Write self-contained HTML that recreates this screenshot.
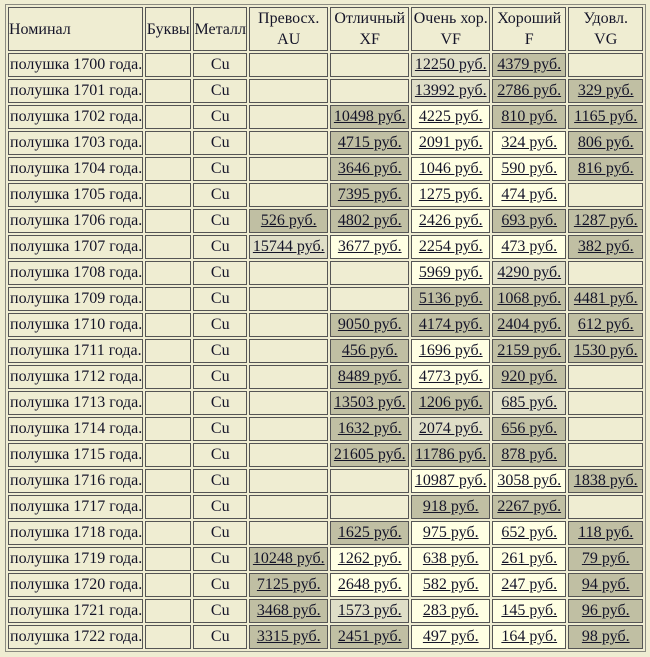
<!DOCTYPE html>
<html><head><meta charset="utf-8">
<style>
html,body{margin:0;padding:0;background:#EFEDD2;width:650px;height:657px;overflow:hidden}
table{position:absolute;left:5px;top:4px;border:1px solid #8a8a80;border-spacing:2px;border-collapse:separate;table-layout:fixed;font-family:"Liberation Serif","Noto Serif CJK SC",serif;font-size:16px;color:#141428}
td{border:1px solid #555;padding:0;height:22px;line-height:20px;text-align:center;white-space:nowrap;overflow:hidden;background:#EFEDD2}
th{border:1px solid #555;padding:0;height:42px;font-weight:normal;line-height:21px;background:#EFEDD2}
td:first-child{text-align:left;padding-left:1px}
.d{background:#C0BFA3}
.w{background:#FFFFE3}
.l{background:#DFDEC7}
u{text-decoration:underline}
</style></head><body>
<table>
<colgroup><col style="width:134px"><col style="width:46px"><col style="width:54px"><col style="width:79px"><col style="width:79px"><col style="width:79px"><col style="width:74px"><col style="width:75px"></colgroup>
<tr><th style="text-align:left">Номинал</th><th>Буквы</th><th>Металл</th><th>Превосх.<br>AU</th><th>Отличный<br>XF</th><th>Очень хор.<br>VF</th><th>Хороший<br>F</th><th>Удовл.<br>VG</th></tr>
<tr><td>полушка 1700 года.</td><td></td><td>Cu</td><td></td><td></td><td class="l"><u>12250 руб.</u></td><td class="d"><u>4379 руб.</u></td><td></td></tr>
<tr><td>полушка 1701 года.</td><td></td><td>Cu</td><td></td><td></td><td class="l"><u>13992 руб.</u></td><td class="d"><u>2786 руб.</u></td><td class="d"><u>329 руб.</u></td></tr>
<tr><td>полушка 1702 года.</td><td></td><td>Cu</td><td></td><td class="d"><u>10498 руб.</u></td><td class="w"><u>4225 руб.</u></td><td class="d"><u>810 руб.</u></td><td class="d"><u>1165 руб.</u></td></tr>
<tr><td>полушка 1703 года.</td><td></td><td>Cu</td><td></td><td class="d"><u>4715 руб.</u></td><td class="w"><u>2091 руб.</u></td><td class="w"><u>324 руб.</u></td><td class="d"><u>806 руб.</u></td></tr>
<tr><td>полушка 1704 года.</td><td></td><td>Cu</td><td></td><td class="d"><u>3646 руб.</u></td><td class="w"><u>1046 руб.</u></td><td class="w"><u>590 руб.</u></td><td class="d"><u>816 руб.</u></td></tr>
<tr><td>полушка 1705 года.</td><td></td><td>Cu</td><td></td><td class="d"><u>7395 руб.</u></td><td class="w"><u>1275 руб.</u></td><td class="w"><u>474 руб.</u></td><td></td></tr>
<tr><td>полушка 1706 года.</td><td></td><td>Cu</td><td class="d"><u>526 руб.</u></td><td class="d"><u>4802 руб.</u></td><td class="w"><u>2426 руб.</u></td><td class="d"><u>693 руб.</u></td><td class="d"><u>1287 руб.</u></td></tr>
<tr><td>полушка 1707 года.</td><td></td><td>Cu</td><td class="l"><u>15744 руб.</u></td><td class="w"><u>3677 руб.</u></td><td class="w"><u>2254 руб.</u></td><td class="w"><u>473 руб.</u></td><td class="d"><u>382 руб.</u></td></tr>
<tr><td>полушка 1708 года.</td><td></td><td>Cu</td><td></td><td></td><td class="w"><u>5969 руб.</u></td><td class="l"><u>4290 руб.</u></td><td></td></tr>
<tr><td>полушка 1709 года.</td><td></td><td>Cu</td><td></td><td></td><td class="d"><u>5136 руб.</u></td><td class="d"><u>1068 руб.</u></td><td class="d"><u>4481 руб.</u></td></tr>
<tr><td>полушка 1710 года.</td><td></td><td>Cu</td><td></td><td class="d"><u>9050 руб.</u></td><td class="d"><u>4174 руб.</u></td><td class="d"><u>2404 руб.</u></td><td class="d"><u>612 руб.</u></td></tr>
<tr><td>полушка 1711 года.</td><td></td><td>Cu</td><td></td><td class="d"><u>456 руб.</u></td><td class="w"><u>1696 руб.</u></td><td class="d"><u>2159 руб.</u></td><td class="d"><u>1530 руб.</u></td></tr>
<tr><td>полушка 1712 года.</td><td></td><td>Cu</td><td></td><td class="d"><u>8489 руб.</u></td><td class="w"><u>4773 руб.</u></td><td class="d"><u>920 руб.</u></td><td></td></tr>
<tr><td>полушка 1713 года.</td><td></td><td>Cu</td><td></td><td class="d"><u>13503 руб.</u></td><td class="d"><u>1206 руб.</u></td><td class="l"><u>685 руб.</u></td><td></td></tr>
<tr><td>полушка 1714 года.</td><td></td><td>Cu</td><td></td><td class="d"><u>1632 руб.</u></td><td class="l"><u>2074 руб.</u></td><td class="d"><u>656 руб.</u></td><td></td></tr>
<tr><td>полушка 1715 года.</td><td></td><td>Cu</td><td></td><td class="d"><u>21605 руб.</u></td><td class="d"><u>11786 руб.</u></td><td class="d"><u>878 руб.</u></td><td></td></tr>
<tr><td>полушка 1716 года.</td><td></td><td>Cu</td><td></td><td></td><td class="w"><u>10987 руб.</u></td><td class="w"><u>3058 руб.</u></td><td class="d"><u>1838 руб.</u></td></tr>
<tr><td>полушка 1717 года.</td><td></td><td>Cu</td><td></td><td></td><td class="d"><u>918 руб.</u></td><td class="d"><u>2267 руб.</u></td><td></td></tr>
<tr><td>полушка 1718 года.</td><td></td><td>Cu</td><td></td><td class="d"><u>1625 руб.</u></td><td class="w"><u>975 руб.</u></td><td class="w"><u>652 руб.</u></td><td class="d"><u>118 руб.</u></td></tr>
<tr><td>полушка 1719 года.</td><td></td><td>Cu</td><td class="d"><u>10248 руб.</u></td><td class="w"><u>1262 руб.</u></td><td class="w"><u>638 руб.</u></td><td class="w"><u>261 руб.</u></td><td class="d"><u>79 руб.</u></td></tr>
<tr><td>полушка 1720 года.</td><td></td><td>Cu</td><td class="d"><u>7125 руб.</u></td><td class="w"><u>2648 руб.</u></td><td class="w"><u>582 руб.</u></td><td class="w"><u>247 руб.</u></td><td class="d"><u>94 руб.</u></td></tr>
<tr><td>полушка 1721 года.</td><td></td><td>Cu</td><td class="d"><u>3468 руб.</u></td><td class="l"><u>1573 руб.</u></td><td class="w"><u>283 руб.</u></td><td class="w"><u>145 руб.</u></td><td class="d"><u>96 руб.</u></td></tr>
<tr><td>полушка 1722 года.</td><td></td><td>Cu</td><td class="d"><u>3315 руб.</u></td><td class="d"><u>2451 руб.</u></td><td class="w"><u>497 руб.</u></td><td class="w"><u>164 руб.</u></td><td class="d"><u>98 руб.</u></td></tr>
</table>
</body></html>
